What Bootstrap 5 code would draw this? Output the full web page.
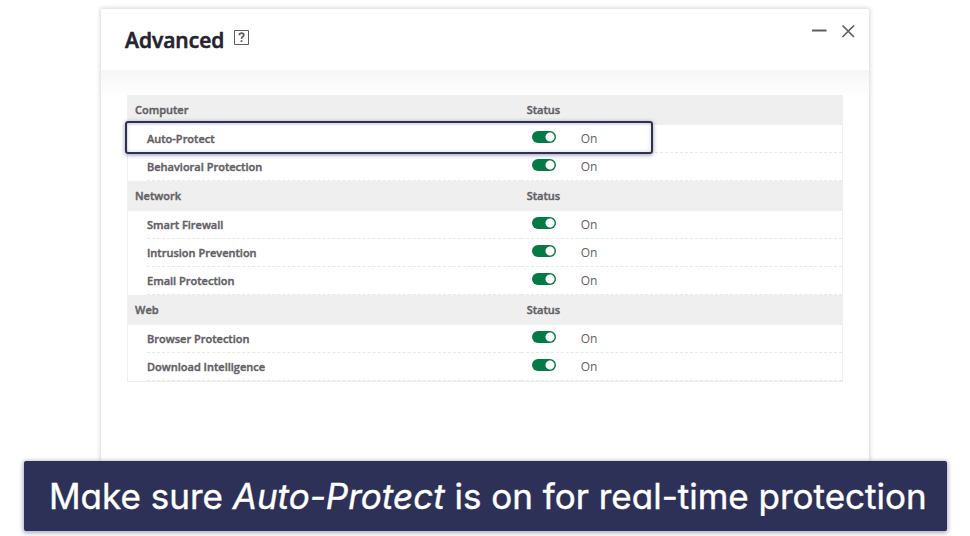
<!DOCTYPE html>
<html lang="en">
<head>
<meta charset="utf-8">
<meta name="viewport" content="width=device-width, initial-scale=1">
<title>Advanced</title>
<link href="https://cdn.jsdelivr.net/npm/bootstrap@5.3.0/dist/css/bootstrap.min.css" rel="stylesheet">
<style>
  body { font-family: "Open Sans", "Noto Sans", sans-serif; color: #626064; background: #fff; }
  .app-window { max-width: 768px; margin-top: 9px; border-radius: 1px; box-shadow: 0 0 4px 1px #d6d6e0; }
  .window-head { height: 61px; padding: 0 14px 0 24px; }
  .title-group { gap: 10px; }
  .window-title { font-size: 21px; line-height: 30px; font-weight: 600; color: #25232f; -webkit-text-stroke: .6px #25232f; }
  .plain-btn { border: 0; padding: 0; background: none; color: #5d5c68; line-height: 0; }
  .window-tools { gap: 14px; padding-top: 14px; }
  .window-body { padding: 25px 26px 0; background: linear-gradient(#f6f6f6, #fefefe 24px, #fff 25px); }
  .status-table { border: 1px solid #efefef; border-width: 0 1px 1px; font-size: 11px; line-height: 16px; table-layout: fixed; border-collapse: separate; border-spacing: 0; }
  .status-table .name-col { width: 55%; }
  .status-table th, .status-table td { padding: 0; }
  .status-table th { font-weight: 600; -webkit-text-stroke: .4px currentColor; }
  .status-table .group-row th { height: 30px; padding: 0 0 0 6px; background: #efefef; vertical-align: middle; }
  .status-table .group-row th:first-child { padding-left: 7px; }
  .status-table .item-row th { padding-left: 19px; }
  .item-line { height: 28px; border-bottom: 1px dashed #e8e8e8; }
  .toggle-line { padding-left: 11px; gap: 25px; font-size: 12px; }
  .form-check-input.toggle { width: 24px; height: 12px; margin: 0 0 3px; border: 0; border-radius: 6px; background: #fff; box-shadow: none; }
  .form-check-input.toggle:checked { background: radial-gradient(circle at 18px 6px, #fff 4px, #067a45 5px); }
  .highlight { top: -4px; left: -3px; width: 74%; height: 33px; border: 2px solid #2e3058; border-radius: 3px; box-shadow: 0 1px 4px rgba(46, 48, 88, .5), inset 0 0 4px rgba(46, 48, 88, .2); pointer-events: none; }
  .caption-bar { margin: 0 23px 5px 24px; padding: 10px 20px 10px 25px; border-radius: 2px; background: #2e3157; color: #fff; font-family: Inter, sans-serif; font-feature-settings: "cv11"; font-size: 35px; line-height: 50px; -webkit-text-stroke: .4px #fff; box-shadow: 0 1px 4px 1px rgba(46, 48, 88, .4); }
</style>
</head>
<body class="min-vh-100 d-flex flex-column">
<main class="app-window w-100 mx-auto flex-grow-1 bg-white">
  <header class="window-head d-flex justify-content-between">
    <div class="title-group d-flex align-items-center">
      <h1 class="window-title mb-0">Advanced</h1>
      <button class="plain-btn mb-1" type="button" aria-label="Help">
        <svg width="15" height="15" viewBox="0 0 15 15" fill="none" stroke="currentColor"><path d="M.5.5h14v14H.5z"/><path stroke-width="1.7" d="M5.3 5.3C5.3 3.9 6.3 3.1 7.6 3.1s2.2.8 2.2 1.9c0 1.6-2.3 1.7-2.3 3.7M7.5 10.2v1.8"/></svg>
      </button>
    </div>
    <div class="window-tools d-flex align-items-start">
      <button class="plain-btn" type="button" aria-label="Minimize">
        <svg width="16" height="16" viewBox="0 0 16 16" stroke="currentColor" stroke-width="2"><path d="M1 7.5h14.5"/></svg>
      </button>
      <button class="plain-btn" type="button" aria-label="Close">
        <svg width="14" height="16" viewBox="0 0 14 16" fill="none" stroke="currentColor" stroke-width="1.7"><path d="M1.5 2.5l11.5 11.5M13 2.5l-11.5 11.5"/></svg>
      </button>
    </div>
  </header>
  <section class="window-body">
    <table class="status-table w-100">
      <colgroup><col class="name-col"><col></colgroup>
      <tbody>
        <tr class="group-row"><th scope="col">Computer</th><th scope="col">Status</th></tr>
        <tr class="item-row position-relative"><th scope="row"><div class="item-line d-flex align-items-center" id="n1">Auto-Protect</div></th><td><div class="item-line toggle-line d-flex align-items-center"><input class="form-check-input toggle" type="checkbox" role="switch" id="s1" aria-labelledby="n1" checked><label for="s1">On</label></div><div class="highlight position-absolute"></div></td></tr>
        <tr class="item-row"><th scope="row"><div class="item-line d-flex align-items-center" id="n2">Behavioral Protection</div></th><td><div class="item-line toggle-line d-flex align-items-center"><input class="form-check-input toggle" type="checkbox" role="switch" id="s2" aria-labelledby="n2" checked><label for="s2">On</label></div></td></tr>
        <tr class="group-row"><th scope="col">Network</th><th scope="col">Status</th></tr>
        <tr class="item-row"><th scope="row"><div class="item-line d-flex align-items-center" id="n3">Smart Firewall</div></th><td><div class="item-line toggle-line d-flex align-items-center"><input class="form-check-input toggle" type="checkbox" role="switch" id="s3" aria-labelledby="n3" checked><label for="s3">On</label></div></td></tr>
        <tr class="item-row"><th scope="row"><div class="item-line d-flex align-items-center" id="n4">Intrusion Prevention</div></th><td><div class="item-line toggle-line d-flex align-items-center"><input class="form-check-input toggle" type="checkbox" role="switch" id="s4" aria-labelledby="n4" checked><label for="s4">On</label></div></td></tr>
        <tr class="item-row"><th scope="row"><div class="item-line d-flex align-items-center" id="n5">Email Protection</div></th><td><div class="item-line toggle-line d-flex align-items-center"><input class="form-check-input toggle" type="checkbox" role="switch" id="s5" aria-labelledby="n5" checked><label for="s5">On</label></div></td></tr>
        <tr class="group-row"><th scope="col">Web</th><th scope="col">Status</th></tr>
        <tr class="item-row"><th scope="row"><div class="item-line d-flex align-items-center" id="n6">Browser Protection</div></th><td><div class="item-line toggle-line d-flex align-items-center"><input class="form-check-input toggle" type="checkbox" role="switch" id="s6" aria-labelledby="n6" checked><label for="s6">On</label></div></td></tr>
        <tr class="item-row"><th scope="row"><div class="item-line d-flex align-items-center" id="n7">Download Intelligence</div></th><td><div class="item-line toggle-line d-flex align-items-center"><input class="form-check-input toggle" type="checkbox" role="switch" id="s7" aria-labelledby="n7" checked><label for="s7">On</label></div></td></tr>
      </tbody>
    </table>
  </section>
</main>
<p class="caption-bar position-relative">Make sure <em>Auto-Protect</em> is on for real-time protection</p>
<script src="https://cdn.jsdelivr.net/npm/bootstrap@5.3.0/dist/js/bootstrap.bundle.min.js"></script>
</body>
</html>
